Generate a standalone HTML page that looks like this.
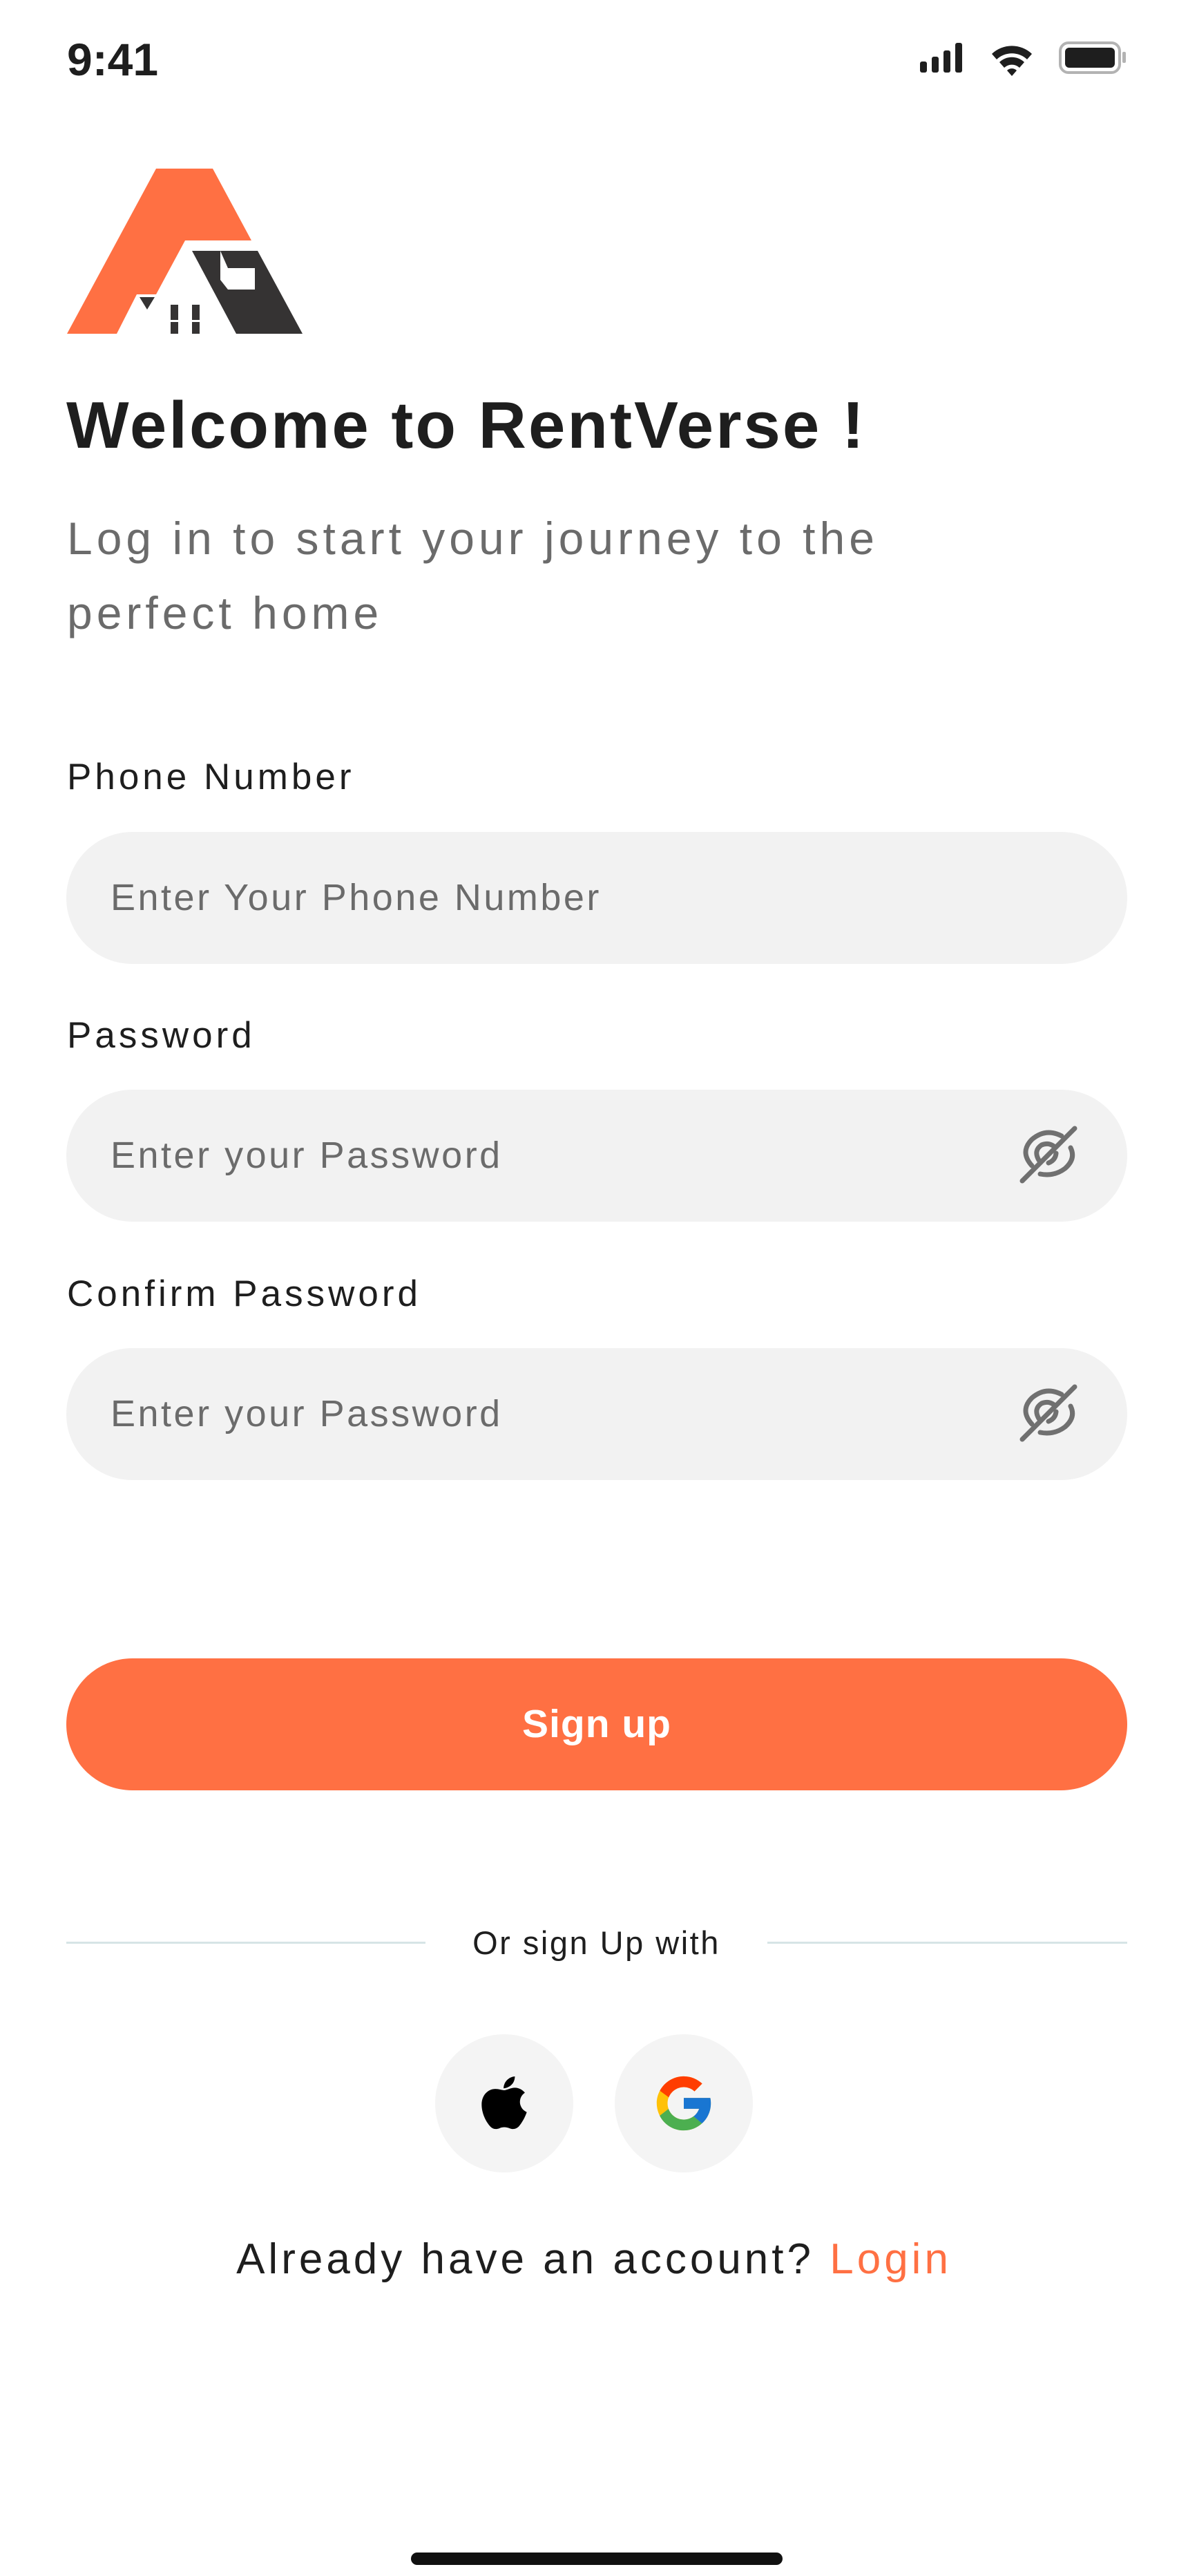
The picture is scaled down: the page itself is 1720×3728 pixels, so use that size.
<!DOCTYPE html>
<html><head><meta charset="utf-8">
<style>
*{margin:0;padding:0;box-sizing:border-box}
body{width:1720px;height:3728px;background:#fff;font-family:"Liberation Sans",sans-serif;position:relative;overflow:hidden;color:#1e1e1e}
.abs{position:absolute}
.label{position:absolute;left:97px;font-size:53px;color:#1e1e1e;letter-spacing:5px}
.input{position:absolute;left:96px;width:1536px;height:191px;border-radius:96px;background:#f2f2f2}
.ph{position:absolute;left:64px;top:0;line-height:191px;font-size:54px;color:#6b6b6b;letter-spacing:3.5px}
.eye{position:absolute;right:68px;top:50px}
.circle{position:absolute;top:2944px;width:200px;height:200px;border-radius:50%;background:#f4f4f4}
</style></head><body>
<div class="abs" style="left:97px;top:46px;font-size:66px;font-weight:bold;line-height:80px">9:41</div>
<svg class="abs" style="left:1320px;top:55px" width="320" height="60" viewBox="1320 55 320 60">
<rect x="1332" y="89" width="10" height="16" rx="3" fill="#1e1e1e"/>
<rect x="1349" y="82" width="10" height="23" rx="3" fill="#1e1e1e"/>
<rect x="1366" y="73" width="10" height="32" rx="3" fill="#1e1e1e"/>
<rect x="1383" y="62" width="10" height="43" rx="3" fill="#1e1e1e"/>
<path d="M1436 78 A42 42 0 0 1 1494 78 L1487 86 A32 32 0 0 0 1443 86Z" fill="#1e1e1e"/>
<path d="M1447 90 A26 26 0 0 1 1483 90 L1476 98 A16 16 0 0 0 1454 98Z" fill="#1e1e1e"/>
<path d="M1458 102 A10 10 0 0 1 1472 102 L1465 110Z" fill="#1e1e1e"/>
<rect x="1535" y="62" width="86" height="43" rx="12" fill="none" stroke="#b3b3b3" stroke-width="4"/>
<rect x="1542" y="69" width="72" height="29" rx="6" fill="#1e1e1e"/>
<rect x="1625" y="75" width="5" height="16" rx="2" fill="#b3b3b3"/>
</svg>
<svg class="abs" style="left:0;top:0" width="500" height="500" viewBox="0 0 500 500">
<polygon points="226,244 308,244 364,348 268,348 226,426 198,426 169,483 97,483" fill="#ff7043"/>
<polygon points="278,363 373,363 438,483 342,483" fill="#353333"/>
<polygon points="319,363 330,388 369,388 369,419 330,419 319,405" fill="#fff"/>
<polygon points="202,430 224,430 213,448" fill="#353333"/>
<rect x="247" y="441" width="11" height="22" fill="#353333"/><rect x="278" y="441" width="11" height="22" fill="#353333"/>
<rect x="247" y="466" width="11" height="17" fill="#353333"/><rect x="278" y="466" width="11" height="17" fill="#353333"/>
</svg>
<div class="abs" style="left:96px;top:556px;font-size:96px;font-weight:bold;line-height:120px;color:#1e1e1e;letter-spacing:3px">Welcome to RentVerse !</div>
<div class="abs" style="left:97px;top:725px;font-size:66px;line-height:108px;color:#6b6b6b;letter-spacing:6px">Log in to start your journey to the<br>perfect home</div>

<div class="label" style="top:1094px">Phone Number</div>
<div class="input" style="top:1204px"><div class="ph">Enter Your Phone Number</div></div>

<div class="label" style="top:1468px">Password</div>
<div class="input" style="top:1577px"><div class="ph">Enter your Password</div>
<svg class="eye" width="90" height="90" viewBox="0 0 90 90" fill="none" stroke="#707070" stroke-width="7" stroke-linecap="round">
<path d="M32 72 Q52 76 68 64 Q84 50 76 34"/>
<path d="M63 17 Q40 5 20 22 Q2 40 20 60"/>
<path d="M44 56 Q54 52 55 42"/>
<path d="M30 52 Q22 38 34 30 Q44 26 52 32"/>
<path d="M6 82 L82 6"/>
</svg></div>

<div class="label" style="top:1842px">Confirm Password</div>
<div class="input" style="top:1951px"><div class="ph">Enter your Password</div>
<svg class="eye" width="90" height="90" viewBox="0 0 90 90" fill="none" stroke="#707070" stroke-width="7" stroke-linecap="round">
<path d="M32 72 Q52 76 68 64 Q84 50 76 34"/>
<path d="M63 17 Q40 5 20 22 Q2 40 20 60"/>
<path d="M44 56 Q54 52 55 42"/>
<path d="M30 52 Q22 38 34 30 Q44 26 52 32"/>
<path d="M6 82 L82 6"/>
</svg></div>

<div class="abs" style="left:96px;top:2400px;width:1536px;height:191px;border-radius:96px;background:#ff7043;color:#fff;font-size:57px;font-weight:bold;text-align:center;line-height:191px;letter-spacing:1px">Sign up</div>

<div class="abs" style="left:96px;top:2810px;width:520px;height:3px;background:#d6e4e6"></div>
<div class="abs" style="left:1111px;top:2810px;width:521px;height:3px;background:#d6e4e6"></div>
<div class="abs" style="left:616px;top:2782px;width:495px;text-align:center;font-size:47px;line-height:60px;color:#1e1e1e;letter-spacing:2.5px">Or sign Up with</div>

<div class="circle" style="left:630px">
<svg style="position:absolute;left:67px;top:61px" width="66" height="78" viewBox="0 0 72 86">
<path d="M36 22 C40 22 46 18 53 18 C60 18 66 22 69 26 C61 31 60 41 62 46 C64 52 68 55 72 57 C69 66 64 74 60 79 C56 84 50 85 45 83 C40 81 34 80 28 83 C22 85 17 84 13 79 C6 71 0 58 0 45 C0 30 10 20 22 20 C28 20 32 22 36 22Z" fill="#000"/>
<path d="M35 19 C35 10 42 1 53 0 C53 10 46 18 35 19Z" fill="#000"/>
</svg></div>
<div class="circle" style="left:890px">
<svg style="position:absolute;left:53px;top:53px" width="94" height="94" viewBox="0 0 48 48">
<path fill="#FFC107" d="M43.6 20H24v8h11.3C33.7 32.7 29.2 36 24 36c-6.6 0-12-5.4-12-12s5.4-12 12-12c3.1 0 5.8 1.2 7.900 3.1l5.7-5.7C34 6.1 29.3 4 24 4 13 4 4 13 4 24s9 20 20 20 20-9 20-20c0-1.3-.1-2.7-.4-4z"/>
<path fill="#FF3D00" d="M6.3 14.7l6.6 4.8C14.7 15.1 19 12 24 12c3.1 0 5.8 1.2 7.9 3.1l5.7-5.7C34 6.1 29.3 4 24 4 16.300 4 9.7 8.3 6.3 14.7z"/>
<path fill="#4CAF50" d="M24 44c5.2 0 9.9-2 13.4-5.2l-6.2-5.2C29.2 35.1 26.7 36 24 36c-5.2 0-9.6-3.3-11.3-7.9l-6.5 5C9.5 39.6 16.2 44 24 44z"/>
<path fill="#1976D2" d="M43.6 20H24v8h11.3c-.8 2.2-2.2 4.2-4.1 5.6l6.2 5.2C37 39.2 44 34 44 24c0-1.300-.1-2.7-.4-4z"/>
</svg></div>

<div class="abs" style="left:0;top:3232px;width:1720px;text-align:center;font-size:62px;line-height:76px;color:#1e1e1e;letter-spacing:5px">Already have an account? <span style="color:#ff7043">Login</span></div>

<div class="abs" style="left:595px;top:3694px;width:538px;height:18px;border-radius:9px;background:#111"></div>
</body></html>
